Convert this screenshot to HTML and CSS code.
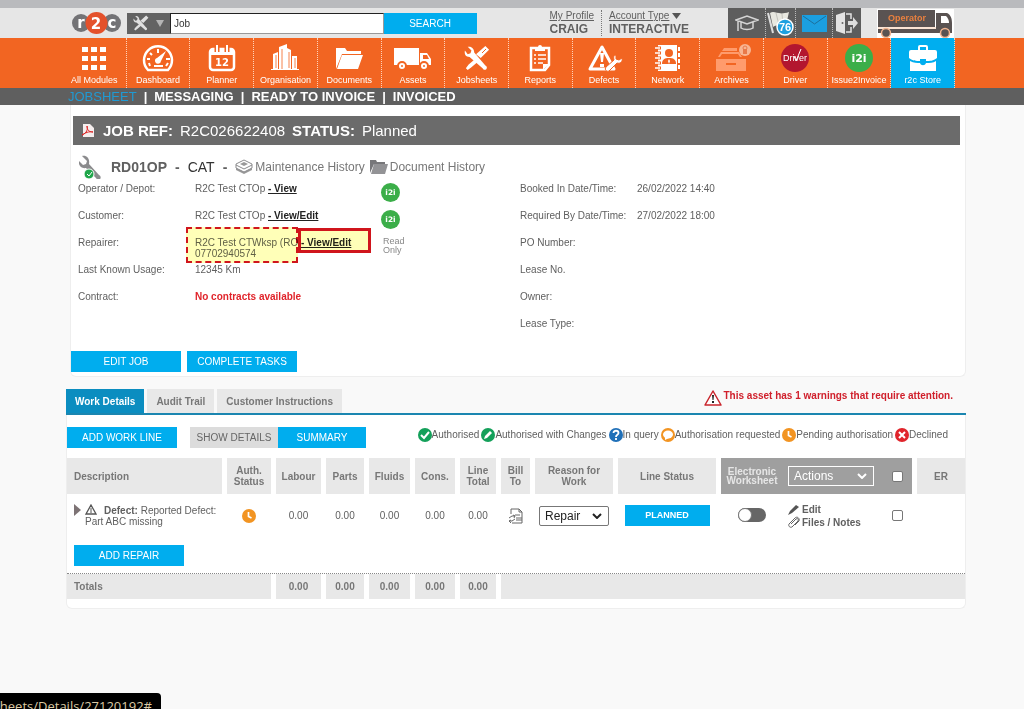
FILE: index.html
```html
<!DOCTYPE html>
<html lang="en">
<head>
<meta charset="utf-8">
<title>r2c - Jobsheet</title>
<link rel="stylesheet" href="styles.css">
</head>
<body>
<svg class="sprite" aria-hidden="true">
  <symbol id="i2i" viewBox="0 0 28 28"><circle cx="14" cy="14" r="14" fill="#3bae49"/><text x="14" y="18" text-anchor="middle" class="badge-text">i2i</text></symbol>
  <symbol id="clock" viewBox="0 0 14 14"><circle cx="7" cy="7" r="7" fill="#f29422"/><path d="M6.5 3v4.5L9.5 9" fill="none" stroke="#fff" stroke-width="1.7"/></symbol>
  <symbol id="wrench" viewBox="0 0 24 24"><path d="M3 1l5 5-1 3-3 1-4-4c-1 4 2 8 7 7l10 10c1 2 3 2 4 1s1-3-1-4L10 9C11 4 8 0 3 1z"/></symbol>
  <symbol id="tools" viewBox="0 0 28 28"><path d="M4 2l4 4-1 3-3 1-3-4c-1 4 1 7 5 7l14 12c1 2 3 2 4 1s1-3-1-4L11 8C11 4 8 1 4 2z"/><path d="M23 1l4 4-9 9-5-4zM12 15l3 3-7 6-4 3-2-2 3-4z"/></symbol>
</svg>

<div class="chrome"></div>
<header class="header">
  <a href="#" class="logo" aria-label="r2c">
    <svg width="49" height="22" viewBox="0 0 49 22"><circle cx="9" cy="11" r="9" fill="#737376"/><circle cx="40" cy="11" r="9" fill="#737376"/><circle cx="24.500" cy="11" r="11" fill="#e4512b"/><text x="9" y="16" class="logo-text">r</text><text x="24" y="17" class="logo-text">2</text><text x="40" y="16" class="logo-text">c</text></svg>
  </a>
  <form class="search">
    <button type="button" class="scope" aria-label="Search type"><svg width="16" height="16" fill="#e0e0e0"><use href="#tools"/></svg><svg width="8" height="7" viewBox="0 0 8 7"><path d="M0 0h8L4 7z" fill="#b5b5b5"/></svg></button>
    <input class="search-box" type="text" value="Job" aria-label="Search">
    <button type="button" class="btn search-btn">SEARCH</button>
  </form>
  <div class="account">
    <div class="acct"><a href="#">My Profile</a><strong>CRAIG</strong></div>
    <div class="acct"><span><a href="#">Account Type</a> <svg width="9" height="6" viewBox="0 0 9 6"><path d="M0 0h9L4.500 6z" fill="#555"/></svg></span><strong>INTERACTIVE</strong></div>
  </div>
  <div class="quick">
    <a href="#" class="q" aria-label="Training"><svg width="24" height="18" viewBox="0 0 24 18" fill="none" stroke="#d4d4d4" stroke-width="1.500"><path d="M1 6l11-4 11 4-11 4zM6 8v6c3 2 9 2 12 0V8M3 7v8M2 16h2"/></svg></a>
    <a href="#" class="q flag" aria-label="Notifications"><svg width="28" height="28" viewBox="0 0 28 28"><path d="M1 4l5 20" stroke="#ddd" stroke-width="2"/><path d="M3 4c5-3 8 3 19-1l-3 13c-5 2-9-1-13 2z" fill="#e8e8e0"/><path d="M9 4l3 12M15 5l1 11" stroke="#c3c3bc"/><circle cx="18" cy="18" r="8" fill="#1da0e0" stroke="#fff" stroke-width="1.500"/><text x="18" y="22" class="count">76</text></svg></a>
    <a href="#" class="q mail" aria-label="Mail"><svg width="25" height="17" viewBox="0 0 25 17"><path fill="#1b9fe0" d="M0 0h25v17H0z"/><path d="M1 1l11.500 8L24 1" fill="none" stroke="#1d6f9b"/></svg></a>
    <a href="#" class="q" aria-label="Log out"><svg width="24" height="24" viewBox="0 0 24 24"><path fill="#e3e3e3" d="M1 4l9-3v22l-9-3z"/><circle cx="7.500" cy="12" r="1" fill="#666"/><path d="M11 3h5v5M11 21h5v-5" fill="none" stroke="#e3e3e3" stroke-width="1.500"/><path d="M13 10h5V6l5 6-5 6v-4h-5z" fill="#ddd"/></svg></a>
  </div>
  <svg class="truck" width="77" height="29" viewBox="0 0 77 29" role="img" aria-label="Operator"><path fill="#fff" d="M0 0h77v29H0z"/><path fill="#5a5352" d="M1 1h57v17H1zM1 20h58V4h11c4 2 5 6 5 10v10H1z"/><path fill="#fff" d="M64 7h5c2 2 3 4 3 7h-8z"/><path fill="none" stroke="#f6c9a9" d="M1 19h58"/><g fill="#5a5352" stroke="#f2b48f" stroke-width="1.500"><circle cx="9" cy="24" r="4.500"/><circle cx="68" cy="24" r="4.500"/></g><text x="30" y="12" class="truck-text">Operator</text></svg>
</header>

<nav class="modules"><div class="modules-in">
  <a href="#"><svg viewBox="0 0 32 28"><path d="M4 3h6v5H4zM13 3h6v5h-6zM22 3h6v5h-6zM4 12h6v5H4zM13 12h6v5h-6zM22 12h6v5h-6zM4 21h6v5H4zM13 21h6v5h-6zM22 21h6v5h-6z"/></svg>All Modules</a>
  <a href="#"><svg viewBox="0 0 32 28"><path d="M6 26a14 14 0 1 1 20 0z" fill="none" stroke="#fff" stroke-width="2.500"/><path d="M8 22l-1-3M5 15h3M8 9l2 2M16 5v4M24 15h4M26 19l-2 3" stroke="#fff" stroke-width="2"/><path d="M24 7l-5 10a3 3 0 1 1-4-3z"/><path d="M12 22h9" stroke="#fff" stroke-width="2"/></svg>Dashboard</a>
  <a href="#"><svg viewBox="0 0 32 28"><rect x="4" y="5" width="24" height="21" rx="3" fill="none" stroke="#fff" stroke-width="2.500"/><path d="M4 5h24v6H4z"/><path d="M11 1v7M21 1v7" stroke="#f26522" stroke-width="5"/><path d="M11 1v7M21 1v7" stroke="#fff" stroke-width="2"/><text x="16" y="22" class="cal-text">12</text></svg>Planner</a>
  <a href="#"><svg viewBox="0 0 32 28"><path d="M4 10l5-2v18H4zM10 3l8-3v26h-8zM18 4l4 2v20h-4zM23 12h5v14h-5zM2 25h28v1H2z"/><path d="M7 11v13M13 5v20M20 8v16M26 14v10" stroke="#f5824c"/></svg>Organisation</a>
  <a href="#"><svg viewBox="0 0 32 28"><path d="M3 25V4h9l2 3h14v3H9zM9 11h21l-5 14H4z"/></svg>Documents</a>
  <a href="#"><svg class="wide" viewBox="0 0 40 28"><path d="M1 4h25v17H1zM27 9h7l4 6v6H27z"/><path d="M30 11h4l2 4h-6z" fill="#f26522"/><g stroke="#f26522" stroke-width="2"><circle cx="9" cy="22" r="4"/><circle cx="31" cy="22" r="4"/></g><g fill="#f26522"><circle cx="9" cy="22" r="1"/><circle cx="31" cy="22" r="1"/></g></svg>Assets</a>
  <a href="#"><svg viewBox="0 0 32 28"><use href="#tools" x="3" y="1" width="26" height="26"/><path d="M21 9l4-4" stroke="#f26522"/></svg>Jobsheets</a>
  <a href="#"><svg viewBox="0 0 32 28"><path d="M7 4h18v17l-4 5H7z" fill="none" stroke="#fff" stroke-width="2.500"/><path d="M11 3h3a2 2 0 0 1 4 0h3v4H11zM19 26v-6h6z"/><path d="M10 11h2M14 11h8M10 15h2M14 15h8M10 19h2M14 19h5" stroke="#fff" stroke-width="1.500"/></svg>Reports</a>
  <a href="#"><svg class="wide" viewBox="0 0 40 28"><path d="M18 3L6 25h24z" fill="none" stroke="#fff" stroke-width="3" stroke-linejoin="round"/><path d="M16 9h4l-1 9h-2zM16 20h4v3h-4z"/><path d="M32 11v4l3 1 3-2c1 4-2 6-5 5l-8 8c-2 1-5-1-3-4l8-7c-1-3 0-5 2-5z" stroke="#f26522"/></svg>Defects</a>
  <a href="#"><svg viewBox="0 0 32 28"><path d="M6 1h19v26H6z"/><path d="M3 4h6M3 9h6M3 14h6M3 19h6M3 24h6" stroke="#f26522" stroke-width="3"/><path d="M3 4h5M3 9h5M3 14h5M3 19h5M3 24h5" stroke="#fff" stroke-width="1.500"/><path d="M26 3h2v4h-2zM26 9h2v4h-2zM26 15h2v4h-2zM26 21h2v4h-2z"/><g fill="#f26522"><circle cx="17" cy="9" r="4"/><path d="M10 20c0-5 3-6 7-6s7 1 7 6z"/></g><path d="M17 15l-1 2 1 3 1-3z"/></svg>Network</a>
  <a href="#"><svg class="wide" viewBox="0 0 40 28"><g fill="#ff9b6c"><path d="M5 15h30v12H5zM7 13l3-5h18l3 5h-2l-2-3H11l-2 3zM11 7l2-3h13v3z"/></g><path d="M15 20h10" stroke="#f26522" stroke-width="2"/><circle cx="34" cy="6" r="6" fill="#f8b592"/><circle cx="34" cy="4" r="2" fill="none" stroke="#e87949"/><path d="M32 5h4v5h-4z" fill="#e87949"/></svg>Archives</a>
  <a href="#"><svg viewBox="0 0 32 28"><circle cx="16" cy="14" r="14" fill="#b3162f"/><text x="16" y="17" class="driver-text">Driver</text><path d="M15 12l2 5 5-12" fill="none" stroke="#fff"/></svg>Driver</a>
  <a href="#"><svg viewBox="0 0 32 28"><use href="#i2i" x="2" width="28" height="28"/></svg>Issue2Invoice</a>
  <a href="#" class="store"><svg viewBox="0 0 32 28"><path d="M4 6h7V3q0-2 2-2h6q2 0 2 2v3h7q2 0 2 2v6c-4 3-7 3-11 3v-2h-6v2c-4 0-7 0-11-3V8q0-2 2-2zM3 17c4 2 7 2 10 2 1 3 5 3 6 0 4 0 7 0 10-2v10H3z"/><path d="M13 3h6v3h-6z" fill="#00aeef"/></svg>r2c Store</a>
</div></nav>

<nav class="subnav">
  <a href="#" class="current">JOBSHEET</a><span>|</span><a href="#">MESSAGING</a><span>|</span><a href="#">READY TO INVOICE</a><span>|</span><a href="#">INVOICED</a>
</nav>

<main>
  <section class="panel job">
    <h1 class="title"><svg width="12" height="13" viewBox="0 0 12 13"><path d="M1 0h7l4 4v9H1z" fill="#f5eeee"/><path d="M0 11c5-2 6-6 5-9 0 4 2 6 6 6-4-1-8 1-11 3z" fill="none" stroke="#d22"/></svg><strong>JOB REF:</strong><span>R2C026622408</span><strong>STATUS:</strong><span>Planned</span></h1>
    <div class="vehicle">
      <svg width="24" height="24" viewBox="0 0 24 24"><use href="#wrench" width="24" height="24" fill="#8b8b8d"/><circle cx="10" cy="19" r="5" fill="#1fa64a" stroke="#fff"/><path d="M8 19l2 2 3-4" fill="none" stroke="#fff"/></svg>
      <strong>RD01OP</strong><b>-</b><span class="make">CAT</span><b>-</b>
      <a href="#"><svg width="18" height="16" viewBox="0 0 18 16"><path d="M1 9l8-4 8 4v2l-8 4-8-4z" fill="#999"/><path d="M1 5l8-4 8 4v4l-8 4-8-4z" fill="#fff" stroke="#8b8b8d"/><path d="M1 6l8 4 8-4" fill="none" stroke="#8b8b8d"/><path d="M5 5l4-2 4 2-4 2z" fill="#999"/></svg>Maintenance History</a>
      <a href="#"><svg width="18" height="14" viewBox="0 0 18 14"><path d="M0 13V0h6l1 2h8v2H4z" fill="#77777a"/><path d="M4 4h14l-3 10H1z" fill="#939396"/></svg>Document History</a>
    </div>
    <div class="details">
      <span>Operator / Depot:</span><span>R2C Test CTOp <a href="#">- View</a></span><svg width="19" height="19"><use href="#i2i"/></svg><span>Booked In Date/Time:</span><span>26/02/2022 14:40</span>
      <span>Customer:</span><span>R2C Test CTOp <a href="#">- View/Edit</a></span><svg width="19" height="19"><use href="#i2i"/></svg><span>Required By Date/Time:</span><span>27/02/2022 18:00</span>
      <span>Repairer:</span><span class="repairer">R2C Test CTWksp (RO <a href="#">- View/Edit</a><br>07702940574<i class="mark dashed"></i><i class="mark solid"></i></span><small>Read<br>Only</small><span>PO Number:</span><span></span>
      <span>Last Known Usage:</span><span>12345 Km</span><span></span><span>Lease No.</span><span></span>
      <span>Contract:</span><strong class="red">No contracts available</strong><span></span><span>Owner:</span><span></span>
      <span></span><span></span><span></span><span>Lease Type:</span><span></span>
    </div>
    <div class="actions"><button class="btn">EDIT JOB</button><button class="btn">COMPLETE TASKS</button></div>
  </section>

  <div class="tabs">
    <button class="tab active">Work Details</button><button class="tab">Audit Trail</button><button class="tab">Customer Instructions</button>
    <p class="warning"><svg width="18" height="16" viewBox="0 0 18 16"><path d="M9 1l8 14H1z" fill="#fff" stroke="#c9252c" stroke-width="1.500" stroke-linejoin="round"/><path d="M8 5h2l-.5 5h-1zM8 11h2v2H8z" fill="#222"/></svg>This asset has 1 warnings that require attention.</p>
  </div>

  <section class="panel work">
    <div class="toolbar">
      <button class="btn">ADD WORK LINE</button>
      <div class="switch"><button class="btn grey">SHOW DETAILS</button><button class="btn">SUMMARY</button></div>
      <ul class="legend">
        <li><svg viewBox="0 0 14 14"><circle cx="7" cy="7" r="7" fill="#14a05a"/><path d="M3 7l3 3 5-6" fill="none" stroke="#fff" stroke-width="2"/></svg>Authorised</li>
        <li><svg viewBox="0 0 14 14"><circle cx="7" cy="7" r="7" fill="#14a05a"/><path d="M3 11l1-3 5-5 2 2-5 5z" fill="#fff"/></svg>Authorised with Changes</li>
        <li><svg viewBox="0 0 14 14"><circle cx="7" cy="7" r="7" fill="#2070b8"/><path d="M4.500 5c0-3 5-3 5 0 0 2-2.500 1.500-2.500 4M7 10v2" fill="none" stroke="#fff" stroke-width="1.800"/></svg>In query</li>
        <li><svg viewBox="0 0 14 14"><circle cx="7" cy="7" r="7" fill="#f29422"/><ellipse cx="7" cy="6.500" rx="5" ry="4" fill="#fff"/><path d="M4 9v3l4-2z" fill="#fff"/></svg>Authorisation requested</li>
        <li><svg><use href="#clock"/></svg>Pending authorisation</li>
        <li><svg viewBox="0 0 14 14"><circle cx="7" cy="7" r="7" fill="#e0242b"/><path d="M4 4l6 6M10 4l-6 6" stroke="#fff" stroke-width="2"/></svg>Declined</li>
      </ul>
    </div>
    <table class="lines">
      <colgroup><col><col class="w49"><col class="w50"><col class="w43"><col class="w46"><col class="w45"><col class="w41"><col class="w34"><col class="w83"><col class="w103"><col class="w62"><col class="w99"><col class="w35"><col class="w48"></colgroup>
      <thead><tr>
        <th class="left">Description</th><th>Auth. Status</th><th>Labour</th><th>Parts</th><th>Fluids</th><th>Cons.</th><th>Line Total</th><th>Bill To</th><th>Reason for Work</th><th>Line Status</th>
        <th class="dark tight">Electronic Worksheet</th><th class="dark act-cell"><select class="pick act" aria-label="Actions"><option>Actions</option></select></th><th class="dark last"><input type="checkbox" aria-label="Select all lines"></th><th>ER</th>
      </tr></thead>
      <tbody>
        <tr class="line">
          <td class="left"><div class="desc"><svg width="7" height="12" viewBox="0 0 7 12"><path d="M0 0l7 6-7 6z" fill="#7d7375"/></svg><p><svg width="12" height="11" viewBox="0 0 12 11"><path d="M6 1l5 9H1z" fill="none" stroke="#555" stroke-width="1.300"/><path d="M6 4v5" stroke="#555"/></svg><strong>Defect:</strong> Reported Defect: Part ABC missing</p></div></td>
          <td><svg width="14" height="14"><use href="#clock"/></svg></td><td>0.00</td><td>0.00</td><td>0.00</td><td>0.00</td><td>0.00</td>
          <td><svg width="16" height="16" viewBox="0 0 16 16" fill="none" stroke="#666"><path d="M3 6V1h8l3 3v11H4M11 1v3h3M7 7h5M8 10h6M8 12h6"/><path d="M1 10l3-2h3M7 11l-3 2H1M5 7l2 1-1 2M3 15l-2-2 2-1"/></svg></td>
          <td><select class="pick" aria-label="Reason for work"><option>Repair</option></select></td>
          <td><button class="btn planned">PLANNED</button></td>
          <td><label class="toggle"><input type="checkbox" aria-label="Electronic worksheet"></label></td>
          <td class="links"><a href="#"><svg width="12" height="11" viewBox="0 0 12 11"><path d="M0 11l2-4 6-6 3 2-7 6z" fill="#555"/></svg>Edit</a><a href="#"><svg width="12" height="12" viewBox="0 0 12 12"><path d="M3 8l5-5c2-1 3 0 2 2l-6 6c-2 1-4-1-3-3l6-6c2-2 5 0 4 3L7 9" fill="none" stroke="#666"/></svg>Files / Notes</a></td>
          <td><input type="checkbox" aria-label="Select line"></td><td></td>
        </tr>
        <tr><td colspan="14" class="add"><button class="btn">ADD REPAIR</button></td></tr>
      </tbody>
      <tfoot><tr><th colspan="2" class="left">Totals</th><th>0.00</th><th>0.00</th><th>0.00</th><th>0.00</th><th>0.00</th><th colspan="7"></th></tr></tfoot>
    </table>
  </section>
</main>
<div class="status-url"><span>heets/Details/27120192#</span></div>
</body>
</html>
```
FILE: styles.css
```css
* { box-sizing: border-box; }
body { margin: 0; min-height: 100vh; background: #f9f9f9; color: #606060; font: 10px/11px "Liberation Sans", Arial, sans-serif; overflow-x: hidden; }
button, input, select { font-family: inherit; margin: 0; }
button { cursor: pointer; }
a { color: inherit; text-decoration: none; }
p, h1, ul { margin: 0; padding: 0; }
.sprite { display: none; }

.badge-text { font: bold 11px "DejaVu Sans", sans-serif; fill: #fff; }
.logo-text { font: bold 15px "DejaVu Sans", sans-serif; fill: #fff; text-anchor: middle; }
.count { font: bold 11px "Liberation Sans", sans-serif; fill: #fff; text-anchor: middle; }
.truck-text { font: bold 9px "Liberation Sans", sans-serif; fill: #e9803f; text-anchor: middle; }
.cal-text { font: bold 10px "DejaVu Sans", sans-serif; fill: #fff; text-anchor: middle; }
.driver-text { font: 9px "Liberation Sans", sans-serif; fill: #fff; text-anchor: middle; }

.chrome { height: 8px; background: #b9babd; }
.header { display: flex; align-items: center; height: 30px; padding: 0 70px 0 72px; background: #e6e6e6; }
.logo { display: flex; }
.search { display: flex; flex: 1; height: 21px; margin-left: 6px; }
.scope { display: flex; align-items: center; gap: 7px; width: 43px; padding: 0 6px; border: 0; background: #636363; }
.search-box { flex: 1; min-width: 0; padding: 0 3px; border: 1px solid #222; border-right-color: #999; border-bottom-color: #999; background: #fff; color: #333; font-size: 10px; }
.btn { height: 21px; min-width: 110px; padding: 0 8px; border: 0; background: #00adee; color: #fff; font-size: 10px; line-height: 11px; }
.search-btn { min-width: 93px; }
.account { display: flex; margin-left: 73px; }
.acct { display: flex; flex-direction: column; gap: 1px; }
.acct + .acct { margin-left: 7px; padding-left: 7px; border-left: 1px dotted #777; }
.acct a { text-decoration: underline; }
.acct strong { font-size: 12px; line-height: 14px; }
.quick { display: flex; align-self: stretch; margin-left: 39px; background: #5d5d5d; }
.q { display: flex; align-items: center; justify-content: center; width: 37px; border-left: 1px dotted #bbb; }
.q:first-child { border: 0; }
.flag { width: 30px; }
.q:last-child { width: 29px; }
.truck { margin-left: 16px; }

.modules { background: #f26522; }
.modules-in { display: grid; grid-template-columns: repeat(14, 1fr); margin: 0 69px 0 63px; }
.modules a { display: flex; flex-direction: column; align-items: center; gap: 3px; height: 50px; padding-top: 6px; border-right: 1px dotted #ffd2ba; color: #fff; font-size: 9px; line-height: 11px; }
.modules svg { width: 32px; height: 28px; fill: #fff; }
.modules .wide { width: 40px; }
.modules .store { background: #00aeef; }

.subnav { display: flex; align-items: center; gap: 7px; height: 17px; padding-left: 68px; background: #5f5f5f; color: #fff; font-size: 13px; line-height: 17px; font-weight: bold; }
.subnav .current { color: #1f9ad3; font-weight: normal; }

main { margin: 0 58px 0 66px; }
.panel { border: 1px solid #eee; border-top: 0; border-radius: 0 0 6px 6px; background: #fff; }
.job { margin-left: 4px; padding: 11px 5px 4px 0; }
.title { display: flex; align-items: center; gap: 7px; height: 29px; margin-left: 2px; padding-left: 9px; background: #6b6b6b; color: #fff; font-size: 15px; line-height: 18px; font-weight: normal; }
.title svg { margin-right: 2px; }
.vehicle { display: flex; align-items: center; gap: 8px; margin: 10px 0 4px 8px; color: #606060; font-size: 14px; line-height: 18px; }
.vehicle .make { color: #333; }
.vehicle a { display: flex; align-items: center; gap: 2px; color: #777; font-size: 12px; }
.vehicle a + a { margin-left: -3px; }
.details { display: grid; grid-template-columns: 117px 186px 139px 117px 1fr; grid-auto-rows: minmax(27px, auto); margin-left: 7px; }
.details a { color: #222; font-weight: bold; text-decoration: underline; }
.details small { padding-left: 2px; color: #888; font-size: 9px; line-height: 9px; }
.red { color: #e0242b; }
.repairer { position: relative; }
.mark { position: absolute; mix-blend-mode: multiply; background: #ffffb8; }
.dashed { left: -9px; top: -10px; width: 112px; height: 36px; border: 2px dashed #d0151c; }
.solid { left: 103px; top: -9px; width: 73px; height: 25px; border: 3px solid #d0151c; }
.actions { display: flex; gap: 6px; padding-top: 6px; }

.tabs { display: flex; align-items: flex-start; gap: 3px; margin-top: 12px; border-bottom: 2px solid #1b86b0; }
.tab { height: 24px; padding: 0 9px; border: 0; background: #e8e8e8; color: #777; font-size: 10px; font-weight: bold; }
.tab.active { background: #0b8dc0; color: #fff; }
.warning { display: flex; gap: 2px; margin: 1px 13px 0 auto; color: #d0202c; font-weight: bold; }

.work { padding: 12px 0 9px; }
.toolbar { display: flex; align-items: center; }
.switch { display: flex; margin-left: 13px; }
.switch .btn { min-width: 88px; }
.btn.grey { background: #dcdcdc; color: #666; padding: 0 5px; }
.legend { display: flex; gap: 2px; margin: 0 17px 6px auto; list-style: none; white-space: nowrap; }
.legend li { display: flex; align-items: center; }
.legend svg { width: 14px; height: 14px; }

.lines { width: 100%; margin-top: 10px; table-layout: fixed; border-spacing: 0; text-align: center; }
.w34 { width: 34px; } .w35 { width: 35px; } .w41 { width: 41px; } .w43 { width: 43px; } .w45 { width: 45px; }
.w46 { width: 46px; } .w48 { width: 48px; } .w49 { width: 49px; } .w50 { width: 50px; } .w62 { width: 62px; }
.w83 { width: 83px; } .w99 { width: 99px; } .w103 { width: 103px; }
th { height: 36px; padding: 0 7px; border-right: 5px solid #fff; background: #e8e8e8; color: #777; }
thead th:nth-child(n+2) { padding: 0 4px; }
td { padding: 0; border-right: 5px solid #fff; }
.left { padding-left: 7px; text-align: left; }
th.dark { border-right: 0; background: #9f9f9f; color: #e6e6e6; }
th.dark.last { border-right: 5px solid #fff; }
th.tight { line-height: 9px; }
thead th.dark:nth-child(n+2) { padding: 0 2px; }
thead th.act-cell:nth-child(n+2) { padding: 0 0 0 5px; text-align: left; }
tfoot th { height: 25px; }
tfoot th:last-child, thead th:last-child { border-right: 0; }
.line td { height: 43px; }
.links, .line td:nth-child(11) { border-right: 0; }
.line svg { vertical-align: middle; }
.desc { display: flex; align-items: flex-start; gap: 4px; }
.desc > svg { flex: none; }
.desc p svg { margin-right: 7px; vertical-align: -1px; }
.pick { appearance: none; width: 70px; height: 20px; padding: 0 5px; border: 1px solid #777; border-radius: 2px; color: #222; font-size: 12px; background: #fff url("data:image/svg+xml,%3Csvg xmlns='http://www.w3.org/2000/svg' width='10' height='6'%3E%3Cpath d='M1 1l4 4 4-4' fill='none' stroke='%23222' stroke-width='2'/%3E%3C/svg%3E") no-repeat right 6px center; }
.pick.act { width: 86px; border-color: #fff; border-radius: 0; color: #fff; background: #9f9f9f url("data:image/svg+xml,%3Csvg xmlns='http://www.w3.org/2000/svg' width='10' height='6'%3E%3Cpath d='M1 1l4 4 4-4' fill='none' stroke='%23fff' stroke-width='2'/%3E%3C/svg%3E") no-repeat right 6px center; }
input[type="checkbox"] { appearance: none; width: 11px; height: 11px; border: 1px solid #777; border-radius: 2px; background: #fff; vertical-align: middle; }
.btn.planned { min-width: 85px; font-size: 9px; font-weight: bold; }
.toggle { display: inline-flex; width: 28px; height: 14px; border-radius: 7px; background: #666; }
.toggle input[type="checkbox"] { width: 14px; height: 14px; border-radius: 7px; }
.links a { display: flex; align-items: center; gap: 2px; height: 13px; padding-left: 5px; font-weight: bold; }
td.add { height: 37px; padding-left: 7px; border: 0; border-bottom: 1px dotted #888; text-align: left; }

.status-url { position: fixed; left: 0; bottom: 0; display: flex; justify-content: flex-end; width: 161px; height: 16px; padding: 5px 9px 0 0; overflow: hidden; border-radius: 0 4px 0 0; background: #000; color: #dcc9a4; font: 13px/16px "Open Sans", sans-serif; }
```
